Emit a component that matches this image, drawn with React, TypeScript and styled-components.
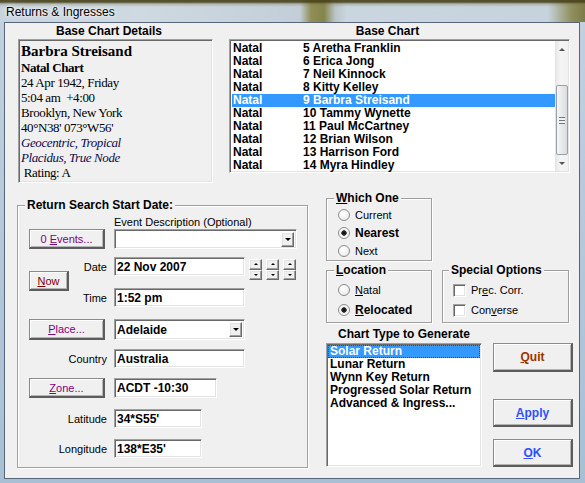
import React from 'react';
import styled, { createGlobalStyle, css } from 'styled-components';

const charts = [
    'Aretha Franklin',
    'Erica Jong',
    'Neil Kinnock',
    'Kitty Kelley',
    'Barbra Streisand',
    'Tammy Wynette',
    'Paul McCartney',
    'Brian Wilson',
    'Harrison Ford',
    'Myra Hindley',
];

const chartTypes = ['Solar Return', 'Lunar Return', 'Wynn Key Return', 'Progressed Solar Return', 'Advanced & Ingress...'];

const App: React.FC = () => {
    return (
        <>
            <GlobalStyle />
            <Window>
                <TitleBar>Returns &amp; Ingresses</TitleBar>
                <Frame>
                    <Client>
                        <TopRow>
                            <DetailsPanel>
                                <PanelHeading $shift={13}>Base Chart Details</PanelHeading>
                                <DetailsBox>
                                    <InfoLine $kind="name">Barbra Streisand</InfoLine>
                                    <InfoLine $kind="title">Natal Chart</InfoLine>
                                    <InfoLine>24 Apr 1942, Friday</InfoLine>
                                    <InfoLine>5:04 am&nbsp; +4:00</InfoLine>
                                    <InfoLine>Brooklyn, New York</InfoLine>
                                    <InfoLine>40°N38' 073°W56'</InfoLine>
                                    <InfoLine $kind="italic">Geocentric, Tropical</InfoLine>
                                    <InfoLine $kind="italic">Placidus, True Node</InfoLine>
                                    <InfoLine>&nbsp;Rating: A</InfoLine>
                                </DetailsBox>
                            </DetailsPanel>
                            <BasePanel>
                                <PanelHeading $shift={24}>Base Chart</PanelHeading>
                                <ChartList>
                                    <ListRows>
                                        {charts.map((name, i) => (
                                            <ChartRow key={name} $selected={i === 4}>
                                                <span>Natal</span>
                                                <span>{i + 5} {name}</span>
                                            </ChartRow>
                                        ))}
                                    </ListRows>
                                    <ScrollBar>
                                        <ScrollArrow><Tri $dir="up" $color="#555" /></ScrollArrow>
                                        <Thumb><Grip /></Thumb>
                                        <ScrollArrow $end><Tri $dir="down" $color="#555" /></ScrollArrow>
                                    </ScrollBar>
                                </ChartList>
                            </BasePanel>
                        </TopRow>

                        <BottomRow>
                            <Group $w={291} $h={270} $pl={11} $pt={3} $top={7}>
                                <Legend>Return Search Start Date:</Legend>
                                <FormGrid>
                                    <SmallLabel $area="evlabel">Event Description (Optional)</SmallLabel>
                                    <PushButton $area="events" $w={76} $h={20} $color="#800080">
                                        0 <u>E</u>vents...
                                    </PushButton>
                                    <Field $area="evcombo" $w={183} $h={20}>
                                        <span />
                                        <DropButton><Tri $dir="down" /></DropButton>
                                    </Field>

                                    <FieldLabel $area="date" $h={19}>Date</FieldLabel>
                                    <DateRow>
                                        <Field $w={131} $h={19}>22 Nov 2007</Field>
                                        <Spinners>
                                            {[0, 1, 2].map((k) => (
                                                <SpinCol key={k}>
                                                    <SpinButton><Tri $dir="up" $size={2} /></SpinButton>
                                                    <SpinButton><Tri $dir="down" $size={2} /></SpinButton>
                                                </SpinCol>
                                            ))}
                                        </Spinners>
                                    </DateRow>
                                    <PushButton $area="3 / 1 / 5 / 2" $w={40} $h={20} $color="#800000" $offset={14}>
                                        <u>N</u>ow
                                    </PushButton>

                                    <FieldLabel $area="time" $h={19}>Time</FieldLabel>
                                    <Field $area="timeinput" $w={131} $h={19}>1:52 pm</Field>

                                    <PushButton $area="place" $w={76} $h={21} $color="#800080">
                                        <u>P</u>lace...
                                    </PushButton>
                                    <Field $area="placecombo" $w={131} $h={21}>
                                        Adelaide
                                        <DropButton><Tri $dir="down" /></DropButton>
                                    </Field>

                                    <FieldLabel $area="country" $h={19}>Country</FieldLabel>
                                    <Field $area="countryinput" $w={131} $h={19}>Australia</Field>

                                    <PushButton $area="zone" $w={76} $h={20} $color="#800080">
                                        <u>Z</u>one...
                                    </PushButton>
                                    <Field $area="zoneinput" $w={103} $h={20}>ACDT -10:30</Field>

                                    <FieldLabel $area="lat" $h={19}>Latitude</FieldLabel>
                                    <Field $area="latinput" $w={88} $h={19}>34*S55'</Field>

                                    <FieldLabel $area="lon" $h={19}>Longitude</FieldLabel>
                                    <Field $area="loninput" $w={88} $h={19}>138*E35'</Field>
                                </FormGrid>
                            </Group>

                            <RightArea>
                                <Group $w={106} $h={70} $pl={11} $pt={1}>
                                    <Legend><u>W</u>hich One</Legend>
                                    <OptionRow $h={18}><Radio /><OptionText>Current</OptionText></OptionRow>
                                    <OptionRow $h={18}><Radio $on /><OptionText $bold>Nearest</OptionText></OptionRow>
                                    <OptionRow $h={18}><Radio /><OptionText>Next</OptionText></OptionRow>
                                </Group>

                                <OptionsRow>
                                    <Group $w={106} $h={60} $pl={11} $pt={3}>
                                        <Legend><u>L</u>ocation</Legend>
                                        <OptionRow $h={20}><Radio /><OptionText><u>N</u>atal</OptionText></OptionRow>
                                        <OptionRow $h={20}><Radio $on /><OptionText $bold><u>R</u>elocated</OptionText></OptionRow>
                                    </Group>
                                    <Group $w={127} $h={60} $pl={10} $pt={3}>
                                        <Legend>Special Options</Legend>
                                        <OptionRow $h={20}><Check /><OptionText>Pr<u>e</u>c. Corr.</OptionText></OptionRow>
                                        <OptionRow $h={20}><Check /><OptionText>Con<u>v</u>erse</OptionText></OptionRow>
                                    </Group>
                                </OptionsRow>

                                <GenerateRow>
                                    <TypeColumn>
                                        <TypeHeading>Chart Type to Generate</TypeHeading>
                                        <TypeList>
                                            {chartTypes.map((t, i) => (
                                                <TypeItem key={t} $selected={i === 0}>{t}</TypeItem>
                                            ))}
                                        </TypeList>
                                    </TypeColumn>
                                    <ActionColumn>
                                        <ActionButton $h={29} $top={16} $color="#a03000"><u>Q</u>uit</ActionButton>
                                        <ActionButton $h={28} $top={27} $color="#2f4fff"><u>A</u>pply</ActionButton>
                                        <ActionButton $h={28} $top={12} $color="#2f4fff"><u>O</u>K</ActionButton>
                                    </ActionColumn>
                                </GenerateRow>
                            </RightArea>
                        </BottomRow>
                    </Client>
                </Frame>
            </Window>
        </>
    );
};

const GlobalStyle = createGlobalStyle`
    html, body {
        margin: 0;
        padding: 0;
    }
    body {
        width: 585px;
        height: 483px;
        overflow: hidden;
        background: #b9cbdc;
        font-family: 'Liberation Sans', Arial, sans-serif;
    }
    * {
        box-sizing: border-box;
    }
`;

const sunken = css`
    border: 1px solid;
    border-color: #a0a0a0 #ffffff #ffffff #a0a0a0;
    box-shadow: inset 1px 1px 0 #696969, inset -1px -1px 0 #e3e3e3;
`;

const raised = css`
    background: #f0f0f0;
    border: 1px solid;
    border-color: #ffffff #696969 #696969 #ffffff;
    box-shadow: inset -1px -1px 0 #a0a0a0, inset 1px 1px 0 #e3e3e3;
`;

const Window = styled.div`
    width: 585px;
    height: 483px;
    display: flex;
    flex-direction: column;
    background: linear-gradient(180deg, #c2d1de 0%, #b4c7d9 55%, #a8bfd4 100%);
`;

const TitleBar = styled.div`
    height: 22px;
    flex: none;
    display: flex;
    align-items: center;
    padding: 1px 0 0 6px;
    font-size: 12px;
    color: #000;
    text-shadow: 0 0 6px #fff, 0 0 3px #fff;
    background:
        linear-gradient(180deg, rgba(72, 66, 26, 0.9) 0, rgba(72, 66, 26, 0.9) 2px, rgba(120, 114, 66, 0.3) 4px, transparent 7px),
        linear-gradient(90deg, #c7d3de 0, #cfd9e2 140px, #c3ced8 300px, #908e56 311px, #85844b 324px, #b9c4c6 335px, #c9d5df 346px, #c6d2dc 548px, #8f8e5c 572px, #7c7c48 585px);
`;

const Frame = styled.div`
    flex: 1;
    min-height: 0;
    display: flex;
    padding: 0 5px 4px 4px;
`;

const Client = styled.div`
    flex: 1;
    display: flex;
    flex-direction: column;
    background: #f0f0f0;
    border: 1px solid #56657a;
    padding: 0 6px 0 12px;
`;

const TopRow = styled.div`
    display: flex;
    align-items: flex-start;
`;

const DetailsPanel = styled.div`
    width: 195px;
    margin-left: 1px;
`;

const BasePanel = styled.div`
    width: 341px;
    margin-left: 16px;
`;

const PanelHeading = styled.div<{ $shift: number }>`
    height: 16px;
    line-height: 16px;
    padding-right: ${(p) => p.$shift}px;
    text-align: center;
    font-size: 12px;
    font-weight: bold;
    color: #000;
`;

const DetailsBox = styled.div`
    height: 144px;
    padding: 2px 0 0 2px;
    ${sunken};
    font-family: 'Liberation Serif', 'Times New Roman', serif;
    color: #000;
`;

const InfoLine = styled.div<{ $kind?: 'name' | 'title' | 'italic' }>`
    white-space: pre;
    font-size: ${(p) => (p.$kind === 'name' ? 15 : 13)}px;
    line-height: ${(p) => (p.$kind === 'name' ? 18 : 15)}px;
    font-weight: ${(p) => (p.$kind === 'name' || p.$kind === 'title' ? 'bold' : 'normal')};
    font-style: ${(p) => (p.$kind === 'italic' ? 'italic' : 'normal')};
    letter-spacing: ${(p) => (p.$kind === 'name' ? 0 : -0.4)}px;
    color: ${(p) => (p.$kind === 'italic' ? '#0c0c4e' : '#000')};
`;

const ChartList = styled.div`
    height: 134px;
    display: flex;
    background: #fff;
    ${sunken};
    padding: 1px;
`;

const ListRows = styled.div`
    flex: 1;
    padding-top: 1px;
`;

const ChartRow = styled.div<{ $selected?: boolean }>`
    display: grid;
    grid-template-columns: 70px 1fr;
    height: 13px;
    line-height: 13px;
    margin-left: 1px;
    padding-left: 1px;
    font-size: 12px;
    font-weight: bold;
    white-space: nowrap;
    color: ${(p) => (p.$selected ? '#fff' : '#000')};
    background: ${(p) => (p.$selected ? '#3399ff' : 'transparent')};
`;

const ScrollBar = styled.div`
    width: 13px;
    display: flex;
    flex-direction: column;
    background: linear-gradient(90deg, #e9e9e9, #f5f5f5 40%, #f1f1f1);
    border-left: 1px solid #e4e4e4;
`;

const ScrollArrow = styled.div<{ $end?: boolean }>`
    height: 16px;
    display: flex;
    align-items: center;
    justify-content: center;
    margin-top: ${(p) => (p.$end ? 'auto' : '0')};
`;

const Thumb = styled.div`
    height: 70px;
    margin-top: 28px;
    border: 1px solid #97a1ab;
    border-radius: 2px;
    background: linear-gradient(90deg, #f6f6f6 0, #e8e8e8 50%, #d9dcdf 100%);
    display: flex;
    align-items: center;
    justify-content: center;
`;

const Grip = styled.span`
    width: 6px;
    height: 7px;
    background: repeating-linear-gradient(180deg, #6e7780 0, #6e7780 1px, #f2f2f2 1px, #f2f2f2 3px);
`;

const Tri = styled.span<{ $dir: 'up' | 'down'; $size?: number; $color?: string }>`
    width: 0;
    height: 0;
    border-left: ${(p) => (p.$size ?? 3)}px solid transparent;
    border-right: ${(p) => (p.$size ?? 3)}px solid transparent;
    ${(p) =>
        p.$dir === 'up'
            ? `border-bottom: ${p.$size ?? 3}px solid ${p.$color ?? '#000'};`
            : `border-top: ${p.$size ?? 3}px solid ${p.$color ?? '#000'};`}
`;

const BottomRow = styled.div`
    display: flex;
    align-items: flex-start;
    margin-top: 8px;
`;

const Group = styled.fieldset<{ $w: number; $h: number; $pl: number; $pt: number; $top?: number }>`
    margin: ${(p) => p.$top ?? 0}px 0 0 0;
    width: ${(p) => p.$w}px;
    height: ${(p) => p.$h}px;
    padding: ${(p) => p.$pt}px 0 0 ${(p) => p.$pl}px;
    border: 1px solid #a0a0a0;
    box-shadow: inset 1px 1px 0 #fff, 1px 1px 0 #fff;
    min-width: 0;
`;

const Legend = styled.legend`
    margin-left: -4px;
    padding: 0 2px;
    height: 14px;
    line-height: 14px;
    background: #f0f0f0;
    font-size: 12px;
    font-weight: bold;
    color: #000;
`;

const FormGrid = styled.div`
    display: grid;
    grid-template-columns: 78px 1fr;
    grid-template-rows: 14px 28px 31px 31px 30px 29px 31px 30px 28px;
    grid-template-areas:
        '. evlabel'
        'events evcombo'
        'date dateinput'
        'time timeinput'
        'place placecombo'
        'country countryinput'
        'zone zoneinput'
        'lat latinput'
        'lon loninput';
    column-gap: 7px;
    align-items: start;
`;

const SmallLabel = styled.div<{ $area: string }>`
    grid-area: ${(p) => p.$area};
    font-size: 11px;
    line-height: 14px;
    color: #000;
    white-space: nowrap;
`;

const FieldLabel = styled.div<{ $area: string; $h: number }>`
    grid-area: ${(p) => p.$area};
    justify-self: end;
    height: ${(p) => p.$h}px;
    line-height: ${(p) => p.$h + 1}px;
    font-size: 11px;
    color: #000;
`;

const PushButton = styled.button<{ $area: string; $w: number; $h: number; $color: string; $offset?: number }>`
    grid-area: ${(p) => p.$area};
    justify-self: start;
    margin: ${(p) => p.$offset ?? 0}px 0 0 0;
    width: ${(p) => p.$w}px;
    height: ${(p) => p.$h}px;
    padding: 0;
    background: #f0f0f0;
    border: 1px solid;
    border-color: #8a8a8a #5c5c5c #5c5c5c #8a8a8a;
    border-right-width: 2px;
    border-bottom-width: 2px;
    box-shadow: inset 1px 1px 0 #fff, inset -1px -1px 0 #b4b4b4;
    font-family: 'Liberation Sans', Arial, sans-serif;
    font-size: 11px;
    color: ${(p) => p.$color};
`;

const Field = styled.div<{ $area?: string; $w: number; $h: number }>`
    ${(p) => (p.$area ? `grid-area: ${p.$area};` : '')}
    width: ${(p) => p.$w}px;
    height: ${(p) => p.$h}px;
    display: flex;
    align-items: center;
    justify-content: space-between;
    padding: 0 2px 0 2px;
    background: #fff;
    ${sunken};
    font-size: 12px;
    font-weight: bold;
    color: #000;
    white-space: nowrap;
`;

const DropButton = styled.span`
    width: 13px;
    height: 15px;
    display: flex;
    align-items: center;
    justify-content: center;
    ${raised};
`;

const DateRow = styled.div`
    grid-area: dateinput;
    display: flex;
    align-items: flex-start;
`;

const Spinners = styled.div`
    display: flex;
    gap: 4px;
    margin: 2px 0 0 4px;
`;

const SpinCol = styled.div`
    width: 13px;
    height: 21px;
    display: flex;
    flex-direction: column;
`;

const SpinButton = styled.span`
    flex: 1;
    display: flex;
    align-items: center;
    justify-content: center;
    ${raised};
`;

const RightArea = styled.div`
    width: 247px;
    margin-left: 18px;
    display: flex;
    flex-direction: column;
`;

const OptionsRow = styled.div`
    display: flex;
    gap: 10px;
    margin-top: 2px;
`;

const OptionRow = styled.div<{ $h: number }>`
    height: ${(p) => p.$h}px;
    display: flex;
    align-items: center;
    gap: 5px;
`;

const OptionText = styled.span<{ $bold?: boolean }>`
    font-size: ${(p) => (p.$bold ? 12 : 11)}px;
    font-weight: ${(p) => (p.$bold ? 'bold' : 'normal')};
    color: #000;
    white-space: nowrap;
`;

const Radio = styled.span<{ $on?: boolean }>`
    width: 12px;
    height: 12px;
    flex: none;
    border-radius: 50%;
    border: 1px solid #8b8b8b;
    background: ${(p) =>
        p.$on
            ? 'radial-gradient(circle, #0c0c0c 0, #2a2a2a 2.4px, #f2f2f2 3px, #ffffff 100%)'
            : 'radial-gradient(circle at 40% 35%, #ffffff 0, #f1f1f1 60%, #dadada 100%)'};
`;

const Check = styled.span`
    width: 13px;
    height: 13px;
    flex: none;
    background: #fff;
    ${sunken};
`;

const GenerateRow = styled.div`
    display: flex;
    align-items: flex-start;
    margin-top: 4px;
`;

const TypeColumn = styled.div`
    width: 156px;
`;

const TypeHeading = styled.div`
    height: 14px;
    line-height: 14px;
    padding-left: 12px;
    font-size: 12px;
    font-weight: bold;
    color: #000;
`;

const TypeList = styled.div`
    height: 124px;
    margin-top: 2px;
    padding: 1px;
    background: #fff;
    ${sunken};
`;

const TypeItem = styled.div<{ $selected?: boolean }>`
    height: 13px;
    line-height: 13px;
    padding-left: 2px;
    font-size: 12px;
    font-weight: bold;
    white-space: nowrap;
    color: ${(p) => (p.$selected ? '#fff' : '#000')};
    background: ${(p) => (p.$selected ? '#3399ff' : 'transparent')};
    outline: ${(p) => (p.$selected ? '1px dotted #3a4a6a' : 'none')};
    outline-offset: -1px;
`;

const ActionColumn = styled.div`
    width: 80px;
    margin-left: 11px;
    display: flex;
    flex-direction: column;
`;

const ActionButton = styled.button<{ $h: number; $top: number; $color: string }>`
    height: ${(p) => p.$h}px;
    margin-top: ${(p) => p.$top}px;
    padding: 0;
    background: #f0f0f0;
    border: 1px solid;
    border-color: #8a8a8a #5c5c5c #5c5c5c #8a8a8a;
    border-right-width: 2px;
    border-bottom-width: 2px;
    box-shadow: inset 1px 1px 0 #fff, inset -1px -1px 0 #b4b4b4;
    font-family: 'Liberation Sans', Arial, sans-serif;
    font-size: 12px;
    font-weight: bold;
    color: ${(p) => p.$color};
`;

export default App;
